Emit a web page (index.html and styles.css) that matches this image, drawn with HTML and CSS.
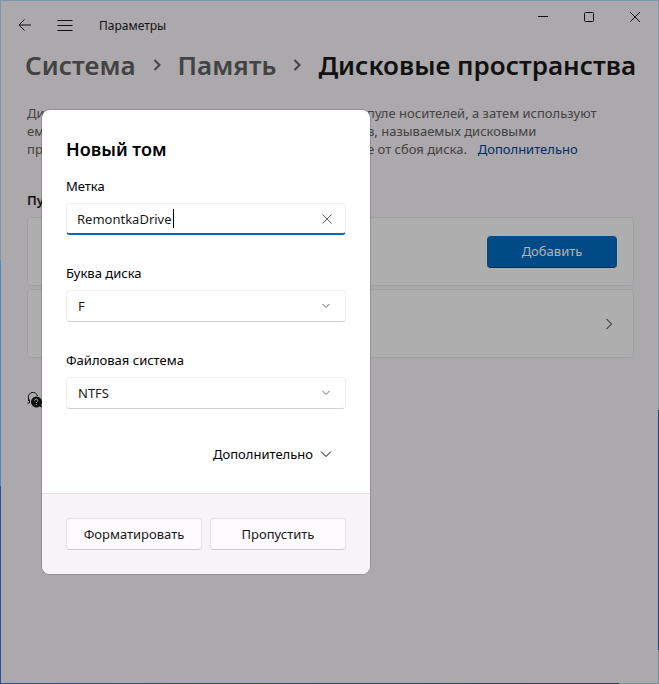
FILE: index.html
```html
<!DOCTYPE html>
<html lang="ru">
<head>
    <meta charset="UTF-8">
    <meta name="viewport" content="width=device-width, initial-scale=1.0">
    <title>Параметры</title>
    <link rel="stylesheet" href="styles.css">
</head>
<body>
    <div class="window">
        <header class="titlebar">
            <button class="icon-button" aria-label="Назад">
                <svg width="14" height="14" viewBox="0 0 14 14"><path d="M13 7H1.500M6.500 1.500L1 7l5.500 5.500"/></svg>
            </button>
            <button class="icon-button menu-button" aria-label="Меню">
                <svg width="16" height="12" viewBox="0 0 16 12"><path d="M0.500 1.500h15M0.500 6.500h15M0.500 11.500h15"/></svg>
            </button>
            <span class="app-name">Параметры</span>
            <div class="window-controls">
                <button class="icon-button" aria-label="Свернуть">
                    <svg width="12" height="12" viewBox="0 0 12 12"><path d="M1 5.500h10"/></svg>
                </button>
                <button class="icon-button" aria-label="Развернуть">
                    <svg width="12" height="12" viewBox="0 0 12 12"><rect x="1.500" y="1.500" width="9" height="9" rx="1"/></svg>
                </button>
                <button class="icon-button" aria-label="Закрыть">
                    <svg width="12" height="12" viewBox="0 0 12 12"><path d="M1 1l10 10M11 1L1 11"/></svg>
                </button>
            </div>
        </header>

        <main class="page">
            <h1 class="breadcrumbs">
                <a href="#">Система</a>
                <svg width="8" height="12" viewBox="0 0 8 12"><path d="M1.500 1l5 5-5 5"/></svg>
                <a href="#">Память</a>
                <svg width="8" height="12" viewBox="0 0 8 12"><path d="M1.500 1l5 5-5 5"/></svg>
                <span>Дисковые пространства</span>
            </h1>

            <p class="description">
                <span class="line"><span class="lead">Дисковые пространства хранят данные в</span>пуле носителей, а затем используют</span>
                <span class="line"><span class="lead">емкость пула для создания томо</span>в, называемых дисковыми</span>
                <span class="line"><span class="lead">пространствами. Они защищают данны</span>е от сбоя диска.  <a href="#">Дополнительно</a></span>
            </p>

            <h2 class="section-title">Пулы носителей</h2>
            <div class="card">
                <button class="add-button">Добавить</button>
            </div>
            <div class="card">
                <svg class="card-arrow" width="8" height="12" viewBox="0 0 8 12"><path d="M1.500 1l5 5-5 5"/></svg>
            </div>

            <a class="help-link" href="#" aria-label="Получить помощь">
                <svg width="16" height="18" viewBox="0 0 16 18">
                    <path class="headset" d="M1.500 10V7a4.500 4.500 0 0 1 9-2M.500 12h2V8.500"/>
                    <path class="bubble" d="M9 5.500a5.500 5.500 0 1 0 3.500 10.100L15 16.500l-.700-2.800A5.500 5.500 0 0 0 9 5.500z"/>
                    <path class="question" d="M7.600 9.700c0-2 3.200-2 3.200-.200 0 1.200-1.600 1.200-1.600 2.500M9.200 13.200v1"/>
                </svg>
            </a>
        </main>

        <div class="overlay"></div>

        <form class="dialog" role="dialog" aria-labelledby="dialogTitle">
            <div class="dialog-body">
                <h2 id="dialogTitle">Новый том</h2>
                <div class="field">
                    <label for="label">Метка</label>
                    <div class="control">
                        <input class="text-box" type="text" id="label" value="RemontkaDrive">
                        <span class="caret"></span>
                        <svg class="clear" width="10" height="10" viewBox="0 0 10 10"><path d="M.500 .500l9 9M9.500 .500l-9 9"/></svg>
                    </div>
                </div>
                <div class="field">
                    <label for="letter">Буква диска</label>
                    <div class="control">
                        <select id="letter"><option>F</option></select>
                        <svg class="chevron" width="8" height="6" viewBox="0 0 8 6"><path d="M.500 1L4 4.500 7.500 1"/></svg>
                    </div>
                </div>
                <div class="field">
                    <label for="fs">Файловая система</label>
                    <div class="control">
                        <select id="fs"><option>NTFS</option></select>
                        <svg class="chevron" width="8" height="6" viewBox="0 0 8 6"><path d="M.500 1L4 4.500 7.500 1"/></svg>
                    </div>
                </div>
                <button class="more-button" type="button">
                    Дополнительно
                    <svg width="12" height="8" viewBox="0 0 12 8"><path d="M1 1.500l5 5 5-5"/></svg>
                </button>
            </div>
            <div class="dialog-footer">
                <button type="button">Форматировать</button>
                <button type="button">Пропустить</button>
            </div>
        </form>
    </div>
</body>
</html>
```
FILE: styles.css
```css
* {
    box-sizing: border-box;
}
body {
    margin: 0;
    font-family: "Noto Sans", "Open Sans", sans-serif;
    font-size: 13px;
    line-height: 18px;
    color: #191919;
}
button, input, select {
    font: inherit;
    color: inherit;
}
svg {
    display: block;
    flex: none;
    fill: none;
    stroke: currentColor;
}
h1, h2, p {
    margin: 0;
}
.window {
    position: relative;
    min-height: 100vh;
    border: 1px solid transparent;
    background:
        linear-gradient(#f6f3f6, #f6f3f6) padding-box,
        linear-gradient(#7f96a8, #7f96a8) 0 0 / 100% 1px no-repeat border-box,
        linear-gradient(90deg, #2c4f96, #333a50 80%, #333a50 94%, #7d8d98 94%) 0 100% / 100% 1px no-repeat border-box,
        linear-gradient(#8097a8 38%, #4a8cb5 38%, #4a8cb5 71%, #2c4f96 71%) 0 0 / 50% 100% no-repeat border-box,
        linear-gradient(#7d94a3 60%, #24437c 60%, #24437c 95%, #7d8d98 95%) 100% 0 / 50% 100% no-repeat border-box;
}
.titlebar {
    display: flex;
    height: 48px;
    padding-left: 4px;
}
.icon-button {
    display: flex;
    justify-content: center;
    align-items: center;
    width: 40px;
    height: 48px;
    padding: 0;
    border: 0;
    background: none;
}
.app-name {
    padding: 16px 0 0 14px;
    font-size: 12px;
}
.window-controls {
    display: flex;
    margin-left: auto;
}
.window-controls .icon-button {
    width: 46px;
    height: 32px;
}
.page {
    padding: 0 24px 0 26px;
}
.breadcrumbs {
    display: flex;
    align-items: center;
    gap: 17px;
    margin: 0 -10px 0 -2px;
    font-size: 26px;
    line-height: 32px;
    font-weight: 600;
    white-space: nowrap;
}
.breadcrumbs a {
    color: #606060;
    text-decoration: none;
}
.breadcrumbs svg {
    color: #606060;
    stroke-width: 2;
}
.description {
    margin-top: 23px;
    color: #606060;
}
.line {
    display: flex;
    white-space: pre;
}
.lead {
    width: 340px;
    overflow: hidden;
}
.line a {
    margin-left: 4px;
    color: #003e92;
    text-decoration: none;
}
.section-title {
    margin: 33px 0 8px;
    font-size: 13px;
    font-weight: 600;
}
.card {
    display: flex;
    justify-content: flex-end;
    align-items: center;
    height: 69px;
    margin-bottom: 3px;
    padding: 0 16px;
    border: 1px solid #e5e5e8;
    border-radius: 4px;
    background: #fafafa;
}
.add-button {
    width: 130px;
    height: 32px;
    border: 0;
    border-bottom: 1px solid #00417a;
    border-radius: 4px;
    background: #006bc1;
    color: #fff;
}
.card-arrow {
    margin-right: 4px;
}
.help-link {
    display: block;
    width: 16px;
    margin-top: 33px;
    color: #191919;
}
.bubble {
    fill: #191919;
    stroke: none;
}
.question {
    stroke: #f6f3f6;
}
.overlay {
    position: absolute;
    inset: 0;
    background: rgba(0, 0, 0, 0.3);
}
.dialog {
    position: absolute;
    top: 109px;
    left: 41px;
    width: 328px;
    border-radius: 8px;
    background: #fff;
    color: #000;
    box-shadow: 0 0 0 1px rgba(0, 0, 0, 0.15);
    overflow: hidden;
}
.dialog-body {
    padding: 25px 24px 23px;
}
.dialog h2 {
    margin-bottom: 14px;
    font-size: 18px;
    line-height: 28px;
    font-weight: 600;
}
.field {
    margin-bottom: 28px;
}
.field label {
    display: block;
    margin-bottom: 8px;
}
.control {
    position: relative;
    height: 33px;
}
.control input,
.control select {
    display: block;
    width: 100%;
    height: 32px;
    padding: 0 30px 0 11px;
    border: 1px solid #f0f0f0;
    border-bottom-color: #d0d0d0;
    border-radius: 4px;
    outline: 0;
    background: #fff;
    color: #1b1b1b;
    appearance: none;
}
.control .text-box {
    padding-left: 10px;
    border-bottom: 2px solid #0067c0;
}
.caret {
    position: absolute;
    top: 6px;
    left: 107px;
    width: 1px;
    height: 19px;
    background: #000;
}
.clear,
.chevron {
    position: absolute;
    top: 11px;
    right: 14px;
    color: #666;
    pointer-events: none;
}
.chevron {
    top: 13px;
    right: 16px;
}
.more-button {
    display: flex;
    align-items: center;
    gap: 7px;
    height: 32px;
    margin-left: auto;
    padding: 0 14px;
    border: 0;
    background: none;
}
.dialog-footer {
    display: flex;
    gap: 8px;
    padding: 24px;
    border-top: 1px solid #e5e5e5;
    background: #f7f3f7;
}
.dialog-footer button {
    flex: 1;
    height: 32px;
    padding: 0;
    border: 1px solid #e6e4e7;
    border-bottom-color: #cccacd;
    border-radius: 4px;
    background: #fdfbfe;
    color: #191919;
}
```
